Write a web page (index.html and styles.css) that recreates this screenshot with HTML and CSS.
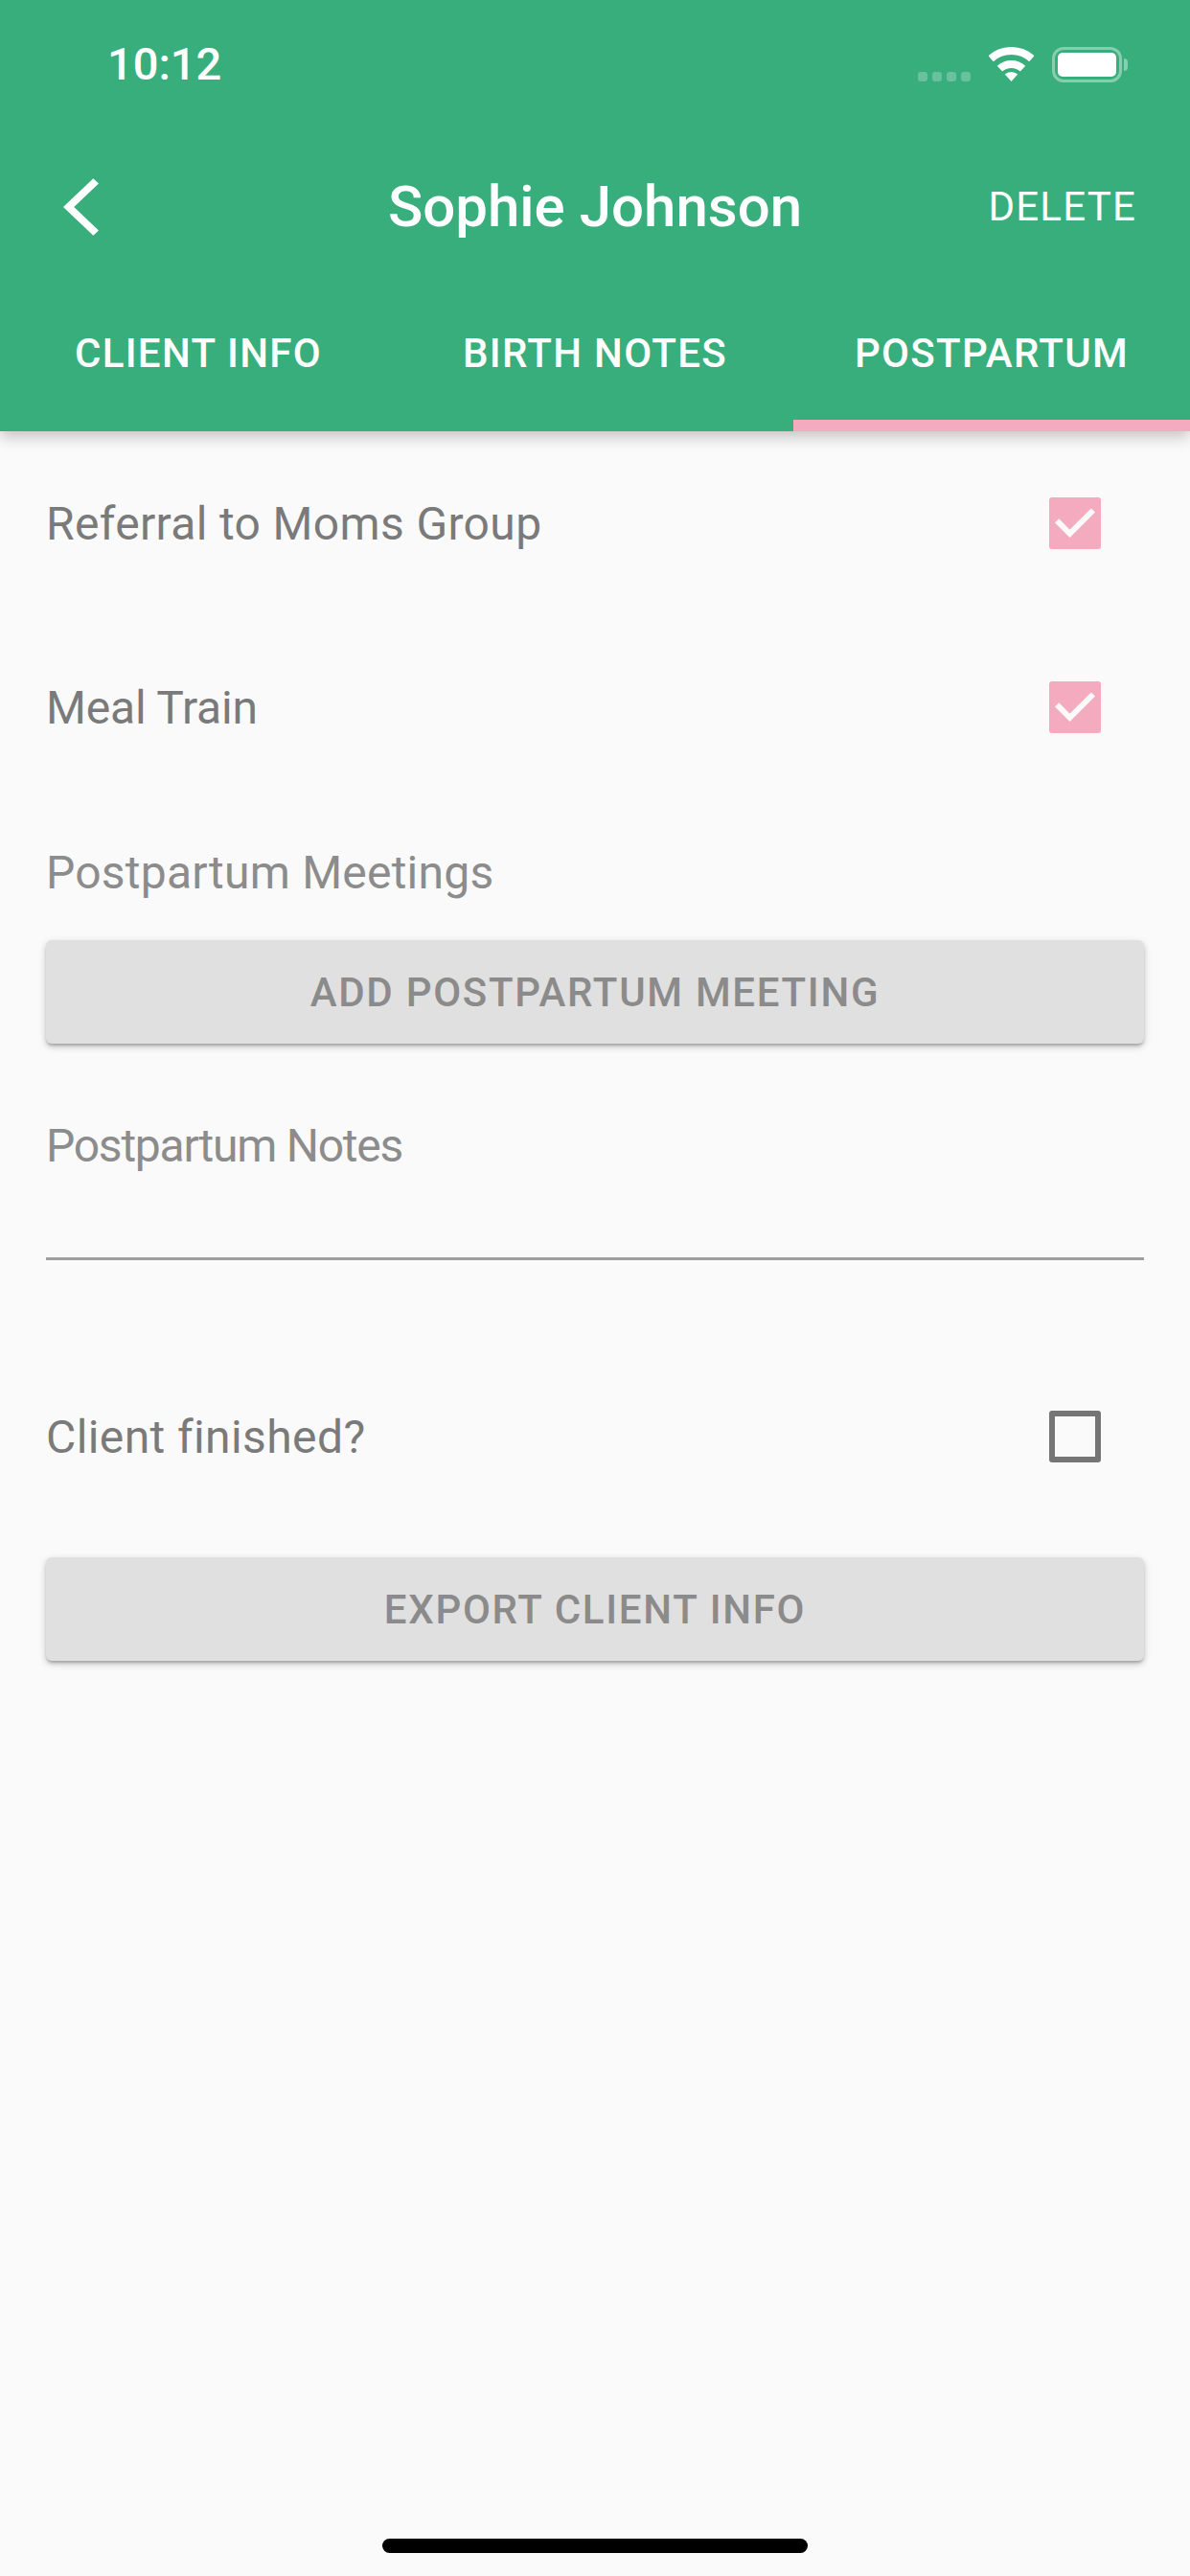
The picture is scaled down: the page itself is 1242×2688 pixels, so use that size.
FILE: index.html
```html
<!DOCTYPE html>
<html lang="en">
<head>
<meta charset="utf-8">
<title>Sophie Johnson</title>
<link rel="stylesheet" href="styles.css">
</head>
<body>
<div class="screen">
  <header class="header">
    <div class="status-bar">
      <span class="time">10:12</span>
      <div class="status-icons">
        <div class="signal"><i></i><i></i><i></i><i></i></div>
        <svg class="wifi" width="47" height="36" viewBox="0 0 47 36">
          <path class="wifi-band" d="M2.1 12.2A32 32 0 0 1 44.9 12.2"/>
          <path class="wifi-band" d="M11.46 22.62A18 18 0 0 1 35.54 22.62"/>
          <path class="wifi-dot" d="M23.5 36L16.8 28.6A10 10 0 0 1 30.2 28.6Z"/>
        </svg>
        <div class="battery"><div class="battery-fill"></div></div>
        <div class="battery-nub"></div>
      </div>
    </div>
    <div class="app-bar">
      <svg class="back" width="76" height="72" viewBox="0 0 24 24" preserveAspectRatio="none"><path d="M11.67 3.87L9.9 2.1 0 12l9.9 9.9 1.77-1.77L3.54 12z"/></svg>
      <h1 class="title">Sophie Johnson</h1>
      <span class="delete">DELETE</span>
    </div>
    <nav class="tabs">
      <span class="tab">CLIENT INFO</span>
      <span class="tab">BIRTH NOTES</span>
      <span class="tab">POSTPARTUM</span>
    </nav>
    <div class="indicator"></div>
  </header>

  <main class="content">
    <div class="check-row first">
      <span class="label referral">Referral to Moms Group</span>
      <span class="box checked"><svg width="54" height="54" viewBox="0 0 54 54"><path d="M8.1 24.3L21.6 37.8 45.9 13.5"/></svg></span>
    </div>
    <div class="check-row second">
      <span class="label meal">Meal Train</span>
      <span class="box checked"><svg width="54" height="54" viewBox="0 0 54 54"><path d="M8.1 24.3L21.6 37.8 45.9 13.5"/></svg></span>
    </div>
    <div class="field-label meetings">Postpartum Meetings</div>
    <button class="btn add">ADD POSTPARTUM MEETING</button>
    <div class="field-label notes">Postpartum Notes</div>
    <div class="underline"></div>
    <div class="check-row finished">
      <span class="label client">Client finished?</span>
      <span class="box"></span>
    </div>
    <button class="btn export">EXPORT CLIENT INFO</button>
  </main>

  <div class="home-bar"></div>
</div>
</body>
</html>
```
FILE: styles.css
```css
* { box-sizing: border-box; }
html, body { margin: 0; padding: 0; }
body { width: 1242px; height: 2688px; overflow: hidden; background: #fafafa; font-family: Roboto, "Noto Sans", sans-serif; }
.screen { width: 1242px; height: 2688px; display: flex; flex-direction: column; background: #fafafa; }

.header { background: #38ae7c; color: #fff; height: 450px; box-shadow: 0 6px 15px rgba(0,0,0,.22); position: relative; flex: none; }
.status-bar { height: 132px; display: flex; justify-content: space-between; align-items: flex-start; padding: 0 65px 0 112px; }
.time { font-size: 47px; line-height: 54px; font-weight: 500; margin-top: 40px; }
.status-icons { display: flex; align-items: flex-start; padding-top: 49px; }
.signal { display: flex; gap: 5px; margin-top: 26px; margin-right: 19px; }
.signal i { display: block; width: 10px; height: 10px; border-radius: 3px; background: rgba(255,255,255,.25); }
.wifi { display: block; margin-right: 19px; }
.wifi-band { fill: none; stroke: #fff; stroke-width: 8; }
.wifi-dot { fill: #fff; }
.battery { width: 73px; height: 37px; border: 3px solid rgba(255,255,255,.4); border-radius: 12px; padding: 3px; }
.battery-fill { width: 100%; height: 100%; background: #fff; border-radius: 5px; }
.battery-nub { width: 4px; height: 13px; margin: 12px 0 0 2px; background: rgba(255,255,255,.4); border-radius: 0 7px 7px 0; }

.app-bar { height: 168px; display: grid; grid-template-columns: 1fr auto 1fr; align-items: center; padding: 0 56px; }
.back { display: block; fill: #fff; margin-left: 10px; }
.title { margin: 0; font-size: 60px; line-height: 70px; font-weight: 500; }
.delete { justify-self: end; font-size: 42px; line-height: 50px; letter-spacing: 1.2px; }

.tabs { display: grid; grid-template-columns: repeat(3, 1fr); height: 138px; padding-bottom: 2px; }
.tab { display: flex; align-items: center; justify-content: center; font-size: 42px; font-weight: 500; letter-spacing: 1.3px; }
.indicator { height: 12px; width: 414px; margin-left: auto; background: #f5abbf; }

.content { padding: 0 48px; flex: none; }
.check-row { display: flex; justify-content: space-between; align-items: center; height: 144px; padding-right: 45px; }
.check-row.first { margin-top: 24px; }
.check-row.second { margin-top: 48px; }
.check-row.finished { margin-top: 112px; }
.label { font-size: 48px; line-height: 56px; color: #7a7a7a; margin-top: 2px; }
.referral { letter-spacing: .35px; }
.meal { letter-spacing: -.18px; }
.client { letter-spacing: .4px; }
.box { display: block; width: 54px; height: 54px; border-radius: 3px; border: 6px solid #757575; flex: none; }
.box.checked { border: 0; background: #f5abbf; }
.box svg { display: block; fill: none; stroke: #fafafa; stroke-width: 6; }

.field-label { font-size: 48px; line-height: 56px; color: #8c8c8c; position: relative; top: 1px; }
.meetings { margin-top: 72px; letter-spacing: .24px; }
.notes { margin-top: 78px; letter-spacing: -1.25px; }
.btn { display: block; width: 100%; height: 108px; border: 0; border-radius: 6px; background: #e0e0e0; color: #8b8b8b; font-family: inherit; font-size: 42px; font-weight: 500; letter-spacing: 1.7px; box-shadow: 0 3px 3px -1px rgba(0,0,0,.2), 0 3px 6px rgba(0,0,0,.14), 0 3px 10px rgba(0,0,0,.1); padding: 0; }
.btn.add { margin-top: 43px; }
.btn.export { margin-top: 54px; }
.underline { height: 3px; margin-top: 89px; background: #9e9e9e; }

.home-bar { width: 444px; height: 15px; border-radius: 8px; background: #000; margin: auto auto 24px; }
```
